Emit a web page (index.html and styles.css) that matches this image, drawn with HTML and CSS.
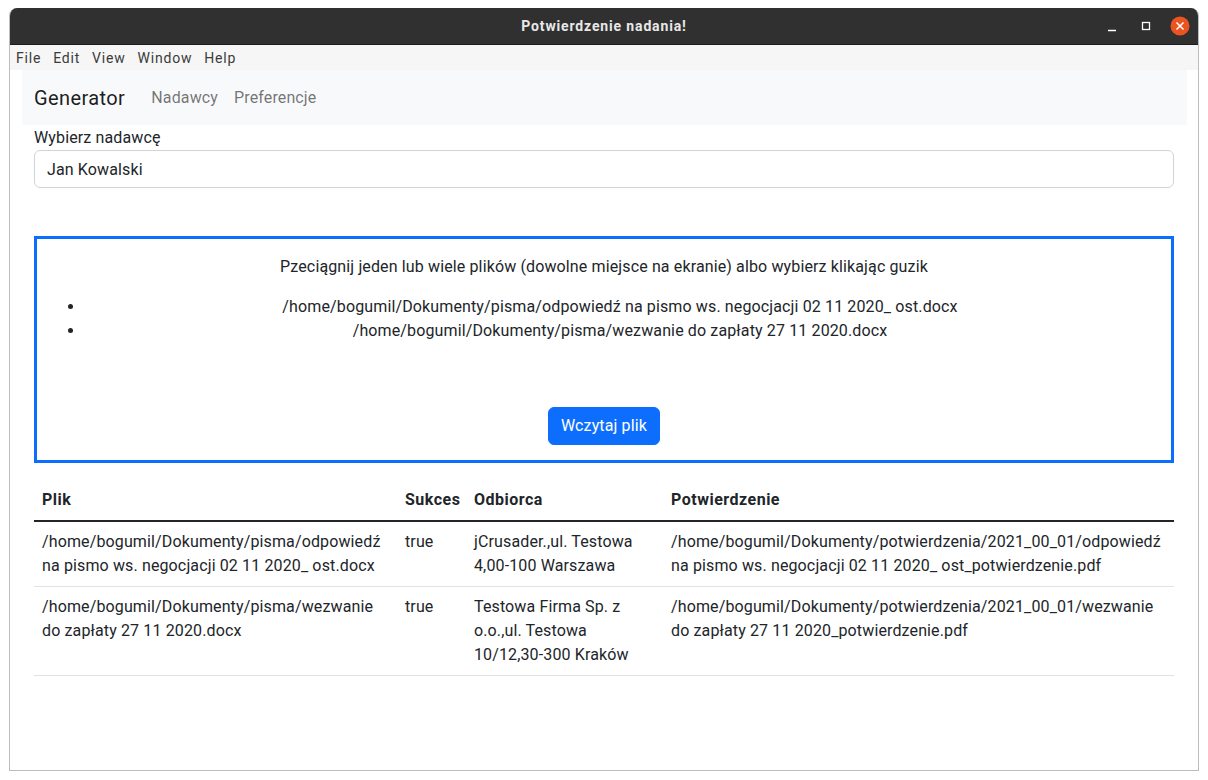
FILE: index.html
```html
<!DOCTYPE html>
<html lang="pl">
<head>
<meta charset="utf-8">
<title>Potwierdzenie nadania!</title>
<link rel="stylesheet" href="styles.css">
</head>
<body>
<div class="window">
  <div class="titlebar">
    <div class="title">Potwierdzenie nadania!</div>
    <div class="controls">
      <svg class="ctl" width="20" height="20" viewBox="0 0 20 20"><path d="M6 14.5h8" stroke="#fff" stroke-width="1.4"/></svg>
      <svg class="ctl" width="20" height="20" viewBox="0 0 20 20"><rect x="6.5" y="6.5" width="7" height="7" fill="none" stroke="#fff" stroke-width="1.3"/></svg>
      <svg class="ctl close" width="20" height="20" viewBox="0 0 20 20"><circle cx="10" cy="10" r="9.5" fill="#e95420"/><path d="M6.5 6.5l7 7M13.5 6.5l-7 7" stroke="#fff" stroke-width="1.5"/></svg>
    </div>
  </div>
  <div class="menubar">
    <span class="menu-item">File</span>
    <span class="menu-item">Edit</span>
    <span class="menu-item">View</span>
    <span class="menu-item">Window</span>
    <span class="menu-item">Help</span>
  </div>
  <div class="app">
    <nav class="navbar">
      <span class="brand">Generator</span>
      <span class="nav-link">Nadawcy</span>
      <span class="nav-link">Preferencje</span>
    </nav>
    <div class="content">
      <label class="form-label">Wybierz nadawcę</label>
      <div class="form-select">Jan Kowalski</div>
      <div class="dropzone">
        <p class="drop-text">Pzeciągnij jeden lub wiele plików (dowolne miejsce na ekranie) albo wybierz klikając guzik</p>
        <ul class="file-list">
          <li>/home/bogumil/Dokumenty/pisma/odpowiedź na pismo ws. negocjacji 02 11 2020_ ost.docx</li>
          <li>/home/bogumil/Dokumenty/pisma/wezwanie do zapłaty 27 11 2020.docx</li>
        </ul>
        <div class="btn-row"><button class="btn">Wczytaj plik</button></div>
      </div>
      <table class="table">
        <colgroup>
          <col class="c1"><col class="c2"><col class="c3"><col class="c4">
        </colgroup>
        <thead>
          <tr><th>Plik</th><th>Sukces</th><th>Odbiorca</th><th>Potwierdzenie</th></tr>
        </thead>
        <tbody>
          <tr>
            <td>/home/bogumil/Dokumenty/pisma/odpowiedź<br>na pismo ws. negocjacji 02 11 2020_ ost.docx</td>
            <td>true</td>
            <td>jCrusader.,ul. Testowa<br>4,00-100 Warszawa</td>
            <td>/home/bogumil/Dokumenty/potwierdzenia/2021_00_01/odpowiedź<br>na pismo ws. negocjacji 02 11 2020_ ost_potwierdzenie.pdf</td>
          </tr>
          <tr>
            <td>/home/bogumil/Dokumenty/pisma/wezwanie<br>do zapłaty 27 11 2020.docx</td>
            <td>true</td>
            <td>Testowa Firma Sp. z<br>o.o.,ul. Testowa<br>10/12,30-300 Kraków</td>
            <td>/home/bogumil/Dokumenty/potwierdzenia/2021_00_01/wezwanie<br>do zapłaty 27 11 2020_potwierdzenie.pdf</td>
          </tr>
        </tbody>
      </table>
    </div>
  </div>
</div>
</body>
</html>
```
FILE: styles.css
```css
* { box-sizing: border-box; }
html, body { margin: 0; padding: 0; background: #ffffff; }
body {
  font-family: Roboto, "Liberation Sans", sans-serif;
  color: #212529;
  letter-spacing: 0.13px;
}
.window {
  margin: 8px 9px 0 9px;
  width: 1190px;
  height: 763px;
  border: 1px solid #bdbdbd;
  border-top: none;
  border-radius: 8px 8px 0 0;
  overflow: hidden;
  background: #fff;
  display: flex;
  flex-direction: column;
}
.titlebar {
  height: 37px;
  background: #303030;
  border-bottom: 1px solid #1c1c1c;
  display: flex;
  align-items: center;
  justify-content: center;
  position: relative;
  flex: none;
}
.title {
  color: #e8e8e8;
  font-weight: bold;
  font-size: 14px;
  letter-spacing: 0.85px;
}
.controls {
  position: absolute;
  right: 8px;
  top: 8px;
  display: flex;
  gap: 14px;
}
.menubar {
  height: 25px;
  background: #f6f6f6;
  display: flex;
  align-items: center;
  padding-left: 0;
  font-size: 14px;
  color: #3b3b3b;
  flex: none;
  letter-spacing: 0.8px;
}
.menu-item { padding: 0 6px; }
.app { padding: 0 11px 0 12px; flex: 1; }
.navbar {
  background: #f8f9fa;
  height: 55px;
  display: flex;
  align-items: center;
  padding-left: 12px;
}
.brand {
  font-size: 20px;
  color: rgba(0,0,0,.9);
  margin-right: 18px;
  letter-spacing: 0.4px;
}
.nav-link {
  font-size: 16px;
  color: rgba(0,0,0,.55);
  padding: 0 8px;
}
.content { padding: 0 13px 0 12px; }
.form-label {
  display: block;
  font-size: 16px;
  line-height: 24px;
  margin: 1px 0 0 0;
}
.form-select {
  height: 38px;
  border: 1px solid #ced4da;
  border-radius: 6px;
  padding: 0 12px;
  font-size: 16px;
  display: flex;
  align-items: center;
}
.dropzone {
  margin-top: 48px;
  border: 3px solid #0d6efd;
  padding: 16px 16px 15px;
  text-align: center;
  font-size: 16px;
  line-height: 24px;
}
.drop-text { margin: 0 0 16px; }
.file-list {
  margin: 0 0 64px;
  padding-left: 32px;
}
.btn-row { display: flex; justify-content: center; }
.btn {
  font-family: inherit;
  letter-spacing: inherit;
  font-size: 16px;
  line-height: 24px;
  color: #fff;
  background: #0d6efd;
  border: 1px solid #0d6efd;
  border-radius: 6px;
  padding: 6px 0;
  width: 112px;
  white-space: nowrap;
}
.table {
  margin-top: 17px;
  width: 100%;
  border-collapse: collapse;
  table-layout: fixed;
  font-size: 16px;
  line-height: 24px;
}
.c1 { width: 363px; }
.c2 { width: 69px; }
.c3 { width: 197px; }
.table th {
  text-align: left;
  font-weight: bold;
  padding: 8px;
  border-bottom: 2px solid #212529;
  letter-spacing: 0.5px;
}
.table td {
  vertical-align: top;
  padding: 8px;
  border-bottom: 1px solid #dee2e6;
  white-space: nowrap;
}
```
